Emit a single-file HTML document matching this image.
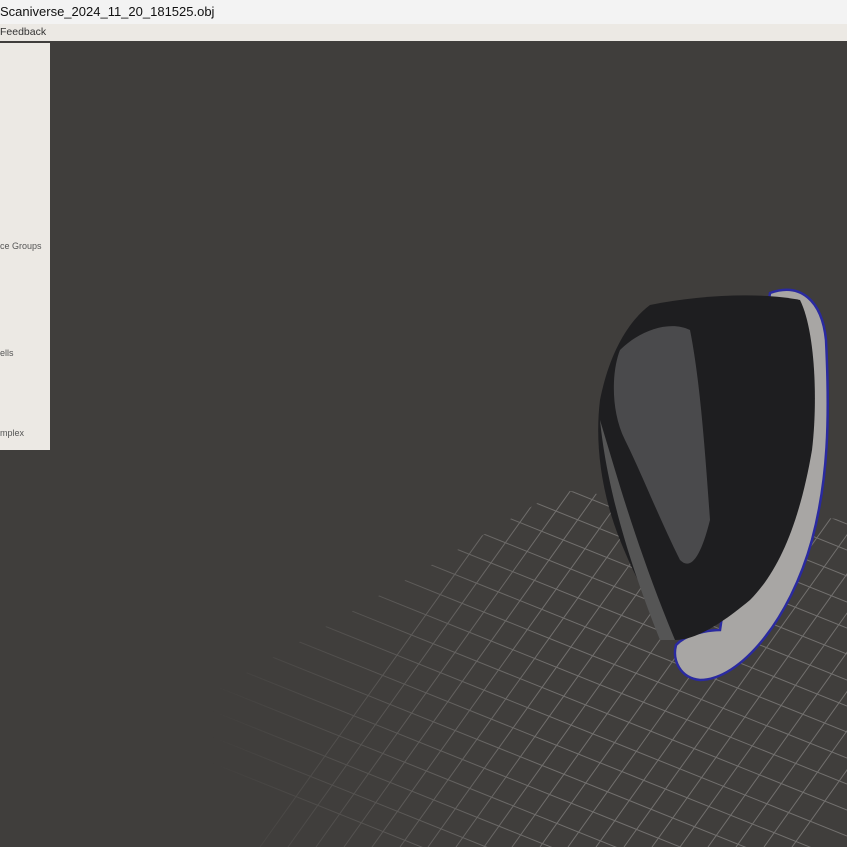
<!DOCTYPE html>
<html style="overflow:hidden"><head><style>
html,body{margin:0;width:847px;height:847px;overflow:hidden}
body{background:#403e3c;font-family:"Liberation Sans",sans-serif;position:relative}
.title{position:absolute;left:0;top:0;width:847px;height:24px;background:#f3f3f3;font-size:13px;line-height:24px;color:#111}
.menu{position:absolute;left:0;top:24px;width:847px;height:17px;background:#ece9e4;font-size:10.5px;line-height:17px;color:#333}
.panel{position:absolute;left:0;top:43px;width:50px;height:407px;background:#ece9e4;font-size:9px;color:#555}
.panel span{position:absolute;left:0;white-space:nowrap}
svg{position:absolute;left:0;top:0}
</style></head><body>
<svg width="847" height="847" id="s">
<defs>
<linearGradient id="fd" x1="0" y1="0" x2="1" y2="0"><stop offset="0.25" stop-color="#fff" stop-opacity="0"/><stop offset="0.65" stop-color="#fff" stop-opacity="0.9"/></linearGradient>
<mask id="m"><rect width="847" height="847" fill="url(#fd)"/></mask>
<clipPath id="g"><polygon points="200,847 200,700 560,490 847,520 847,847"/></clipPath>
</defs>
<g clip-path="url(#g)" mask="url(#m)" stroke="#787674" stroke-width="1" id="grid"></g>
<path d="M770,293 C800,282 822,300 826,340 C830,420 828,480 812,540 C790,620 740,680 700,680 C680,678 672,660 676,645 C690,630 720,630 720,630 Z" fill="#a8a6a4" stroke="#2a2aa0" stroke-width="2.5"/>
<path d="M650,305 C700,295 760,292 800,300 C815,330 818,400 812,450 C800,520 780,570 750,600 C720,625 695,640 675,640 C660,620 640,590 620,540 C600,490 595,440 600,400 C610,350 630,320 650,305 Z" fill="#1e1e20"/>
<path d="M620,350 C640,330 670,320 690,330 C700,380 705,450 710,520 C700,560 690,570 680,560 C660,520 640,470 625,440 C610,410 612,370 620,350 Z" fill="#4a4a4c"/>
<path d="M600,420 C605,470 620,540 660,640 L675,640 C650,580 630,520 615,470 Z" fill="#555"/>
</svg>
<script>
var g=document.getElementById('grid'),h='';
for(var i=-8;i<14;i++){var y=540+i*26;h+='<line x1="200" y1="'+(y-120)+'" x2="847" y2="'+(y+140)+'"/>';}
for(var j=0;j<20;j++){var x=260+j*28;h+='<line x1="'+x+'" y1="847" x2="'+(x+300)+'" y2="427"/>';}
g.innerHTML=h;
</script>
<div class="title">Scaniverse_2024_11_20_181525.obj</div>
<div class="menu">Feedback</div>
<div class="panel">
<span style="top:198px">ce Groups</span>
<span style="top:305px">ells</span>
<span style="top:385px">mplex</span>
</div>
</body></html>
